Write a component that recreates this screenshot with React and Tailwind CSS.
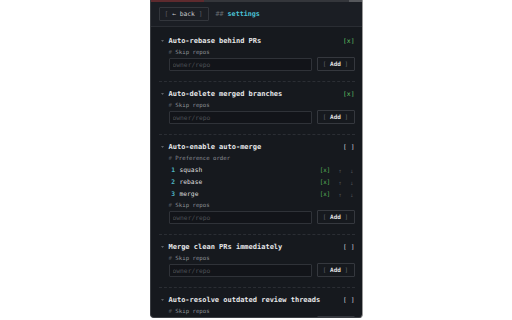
import React from "react";

// Settings sections shown in the popup
const SECTIONS = [
  { title: "Auto-rebase behind PRs", on: true },
  { title: "Auto-delete merged branches", on: true },
  { title: "Auto-enable auto-merge", on: false, order: ["squash", "rebase", "merge"] },
  { title: "Merge clean PRs immediately", on: false },
  { title: "Auto-resolve outdated review threads", on: false },
];

const Toggle = ({ on }) =>
  on ? (
    <span className="text-[6.4px] leading-[10px] text-[#62c466]">[x]</span>
  ) : (
    <span className="text-[6.4px] leading-[10px] text-[#d4d6d9]">[ ]</span>
  );

const Label = ({ children }) => (
  <div className="mt-[2px] h-[8px] text-[5.7px] leading-[8px] whitespace-pre">
    <span className="text-[#53565c]"># </span>
    <span className="text-[#8d9096]">{children}</span>
  </div>
);

const SkipRepos = () => (
  <>
    <Label>Skip repos</Label>
    <div className="mt-[2px] flex gap-[5px]">
      <input
        placeholder="owner/repo"
        className="h-[13px] flex-1 min-w-0 rounded-[1px] border border-[#2f3238] bg-[#121419] pl-[3px] text-[6.3px] text-[#ddd] outline-none placeholder:text-[#4d5056]"
      />
      <button className="h-[14px] -mt-[1px] w-[38px] rounded-[1px] border border-[#35383e] bg-[#16191e] text-[6px] leading-[12px] whitespace-pre">
        <span className="text-[#676a70]">[ </span>
        <span className="font-bold text-[#e2e2e2]">Add</span>
        <span className="text-[#676a70]"> ]</span>
      </button>
    </div>
  </>
);

const Section = ({ title, on, order }) => (
  <section className="ml-[8px] mr-[7px] border-b border-dashed border-[#2b2e34] pt-[7px] pb-[10px]">
    <div className="flex h-[10px] items-center">
      <div className="w-[10px] pl-[2.5px]">
        <svg width="3" height="2" viewBox="0 0 3 2" className="block">
          <polygon points="0,0 3,0 1.5,2" fill="#5b5e64" />
        </svg>
      </div>
      <div className="flex-1 text-[7px] font-bold leading-[10px] text-[#e6e7e9]">{title}</div>
      <Toggle on={on} />
    </div>
    <div className="pl-[10px]">
      {order && (
        <>
          <Label>Preference order</Label>
          <div className="mt-[2px]">
            {order.map((name, i) => (
              <div key={name} className="flex h-[12px] items-center pl-[2.7px] pr-[1px] text-[6.3px]">
                <span className="font-bold text-[#4fb6c2]">{i + 1}</span>
                <span className="ml-[4.5px] flex-1 text-[#dcdcdc]">{name}</span>
                <span className="text-[5.8px] text-[#5cb85c]">[x]</span>
                <span className="ml-[8px] text-[6px] text-[#4a4d53]">↑</span>
                <span className="ml-[8px] text-[6px] text-[#4a4d53]">↓</span>
              </div>
            ))}
          </div>
        </>
      )}
      <div className={order ? "-mt-[1px]" : ""}>
        <SkipRepos />
      </div>
    </div>
  </section>
);

export default function App() {
  return (
    <div className="h-[320px] w-[512px] bg-white font-['DejaVu_Sans_Mono',monospace]">
      <div className="mx-auto h-[318px] w-[213px] overflow-hidden rounded-b-[4px] border-b border-l border-r border-[#3b3e43] border-r-[#9a9a9a] bg-[#16191e]">
        {/* top strip */}
        <div className="flex h-[2px]">
          <div className="w-[53px] bg-[#5e2a2e]" />
          <div className="flex-1 bg-[#34363b]" />
          <div className="w-[13px] bg-[#56585c]" />
        </div>

        {/* header */}
        <header className="flex h-[25px] items-center border-b border-[#2a2d33] bg-[#1b1e24] pl-[8px]">
          <div className="flex h-[14px] w-[50px] items-center justify-center rounded-[1px] border border-[#33363c] text-[6.3px] whitespace-pre">
            <span className="text-[#5d6066]">[ </span>
            <span className="text-[#c9cbce]">← back</span>
            <span className="text-[#5d6066]"> ]</span>
          </div>
          <div className="ml-[7px] text-[6.7px] whitespace-pre">
            <span className="text-[#686b71]">## </span>
            <span className="font-bold text-[#4cc3d6]">settings</span>
          </div>
        </header>

        <div className="pt-[2px]">
          {SECTIONS.map((s) => (
            <Section key={s.title} {...s} />
          ))}
        </div>
      </div>
    </div>
  );
}
